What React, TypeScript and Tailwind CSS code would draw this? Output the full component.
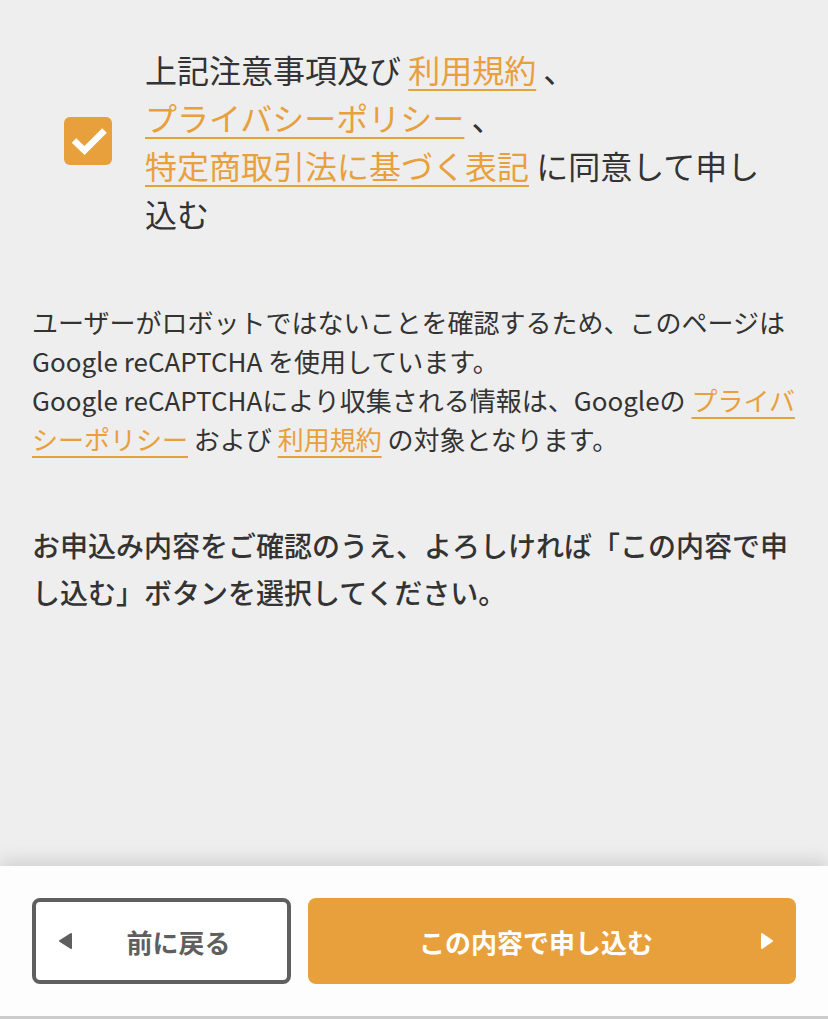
export default function App() {
  const link = "text-[#e8a03c] underline decoration-2 underline-offset-[6px]";

  return (
    <div
      className="flex min-h-screen flex-col bg-[#eeeeee] text-[#333333]"
      style={{ fontFamily: '"Noto Sans CJK JP", "Noto Sans", sans-serif' }}
    >
      <main className="flex-1 px-8 pt-[45px] pb-16">
        {/* Agreement checkbox */}
        <label className="flex items-center gap-[33px] px-8">
          <span className="flex h-12 w-12 shrink-0 items-center justify-center rounded-[6px] bg-[#e8a03c]">
            <svg viewBox="0 0 48 48" className="h-12 w-12" fill="none">
              <path d="M10 23.5 L20.5 33.5 L40.5 13.5" stroke="#ffffff" strokeWidth="6.5" strokeLinecap="butt" />
            </svg>
          </span>
          <span className="text-[32px] leading-[48px]">
            上記注意事項及び <a className={link}>利用規約</a> 、
            <br />
            <a className={link}>プライバシーポリシー</a> 、
            <br />
            <a className={link}>特定商取引法に基づく表記</a> に同意して申し込む
          </span>
        </label>

        {/* reCAPTCHA notice */}
        <p className="mt-[65px] text-[26px] leading-[39px]">
          ユーザーがロボットではないことを確認するため、このページはGoogle reCAPTCHA を使用しています。
          <br />
          Google reCAPTCHAにより収集される情報は、Googleの <a className={link}>プライバシーポリシー</a> および{" "}
          <a className={link}>利用規約</a> の対象となります。
        </p>

        <p className="mt-16 text-[28px] font-medium leading-[47px]">
          お申込み内容をご確認のうえ、よろしければ「この内容で申し込む」ボタンを選択してください。
        </p>
      </main>

      {/* Footer actions */}
      <footer className="flex gap-[17px] border-b-[3px] border-[#cccccc] bg-[#fdfdfd] px-8 py-8 shadow-[0_-6px_16px_rgba(0,0,0,0.12)]">
        <button className="relative flex h-[86px] w-[259px] items-center justify-center rounded-lg border-4 border-[#5f5f5f] bg-white pl-[34px] text-[26px] font-bold text-[#5f5f5f]">
          <svg viewBox="0 0 15 18" className="absolute left-[22px] h-[18px] w-[15px]">
            <path d="M13 2 L2 9 L13 16 Z" fill="#5f5f5f" stroke="#5f5f5f" strokeWidth="2" strokeLinejoin="round" />
          </svg>
          前に戻る
        </button>
        <button className="relative flex h-[86px] flex-1 items-center justify-center rounded-lg bg-[#e8a03c] pr-[32px] text-[26px] font-bold text-white">
          この内容で申し込む
          <svg viewBox="0 0 14 18" className="absolute right-[22px] h-[18px] w-[14px]">
            <path d="M2 2 L12 9 L2 16 Z" fill="#ffffff" stroke="#ffffff" strokeWidth="2" strokeLinejoin="round" />
          </svg>
        </button>
      </footer>
    </div>
  );
}
